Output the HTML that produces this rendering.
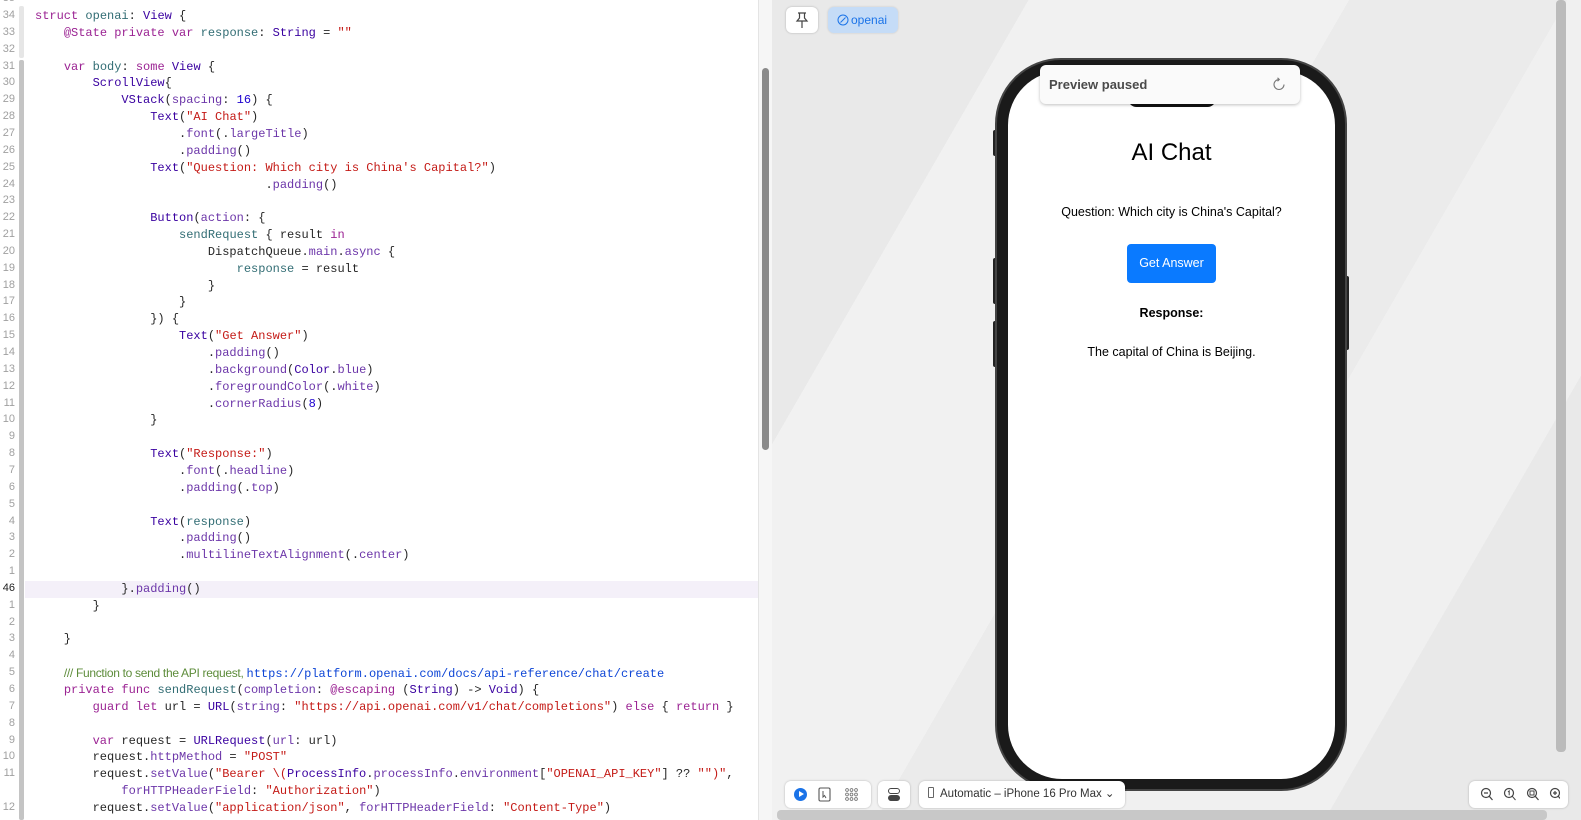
<!DOCTYPE html>
<html><head><meta charset="utf-8"><style>
*{margin:0;padding:0;box-sizing:border-box}
body{width:1581px;height:820px;overflow:hidden;background:#fff;position:relative;font-family:"Liberation Sans",sans-serif}
#ed{position:absolute;left:0;top:0;width:758px;height:820px;background:#fff;overflow:hidden}
.ln{position:absolute;left:0;width:15px;text-align:right;font:11px "Liberation Sans",sans-serif;color:#a0a0a0}
.cl{position:absolute;left:35px;font:12px/16px "Liberation Mono",monospace;color:#262626;white-space:pre}
.k{color:#9b2393}.t{color:#3900a0}.p{color:#326d74}.m{color:#6c36a9}.s{color:#c41a16}.n{color:#1c00cf}.c{color:#5d8c3a;font-family:"Liberation Sans",sans-serif;letter-spacing:-0.3px}.u{color:#0e46d6}
#pv{position:absolute;left:772px;top:0;width:809px;height:820px;background:#ececec;overflow:hidden}
.btn{position:absolute;background:#fff;border-radius:6px;box-shadow:0 0 2px rgba(0,0,0,.25)}
svg{position:absolute}
</style></head><body>
<div id="ed">
<div style="position:absolute;left:19px;top:6px;width:5px;height:52px;background:#e6e6e6;border-radius:2px"></div>
<div style="position:absolute;left:19px;top:60px;width:5px;height:760px;background:#c4c4c4;border-radius:2px"></div>
<div style="position:absolute;left:25px;top:581px;width:733px;height:17px;background:#f4f0f9"></div>
<div id="code"></div>
</div>
<div style="position:absolute;left:758px;top:0;width:14px;height:820px;background:#f6f6f6;border-left:1px solid #e4e4e4"></div>
<div style="position:absolute;left:762px;top:68px;width:7px;height:382px;background:#8a8a8a;border-radius:4px"></div>
<div id="pv">
<div style="position:absolute;inset:0;background:linear-gradient(120deg,#e9e9e9 0 20%,#f1f1f1 20% 45%,#ebebeb 45% 62%,#f0f0f0 62% 80%,#e9e9e9 80%)"></div>
<div class="btn" style="left:14px;top:7px;width:32px;height:26px"></div>
<svg style="left:22px;top:11px" width="16" height="18" viewBox="0 0 16 18" fill="none" stroke="#444" stroke-width="1.2"><path d="M4 2h8M5.5 2v5l-2.5 3h10l-2.5-3V2M8 10v7"/></svg>
<div style="position:absolute;left:56px;top:7px;width:70px;height:26px;background:#c5dcf7;border-radius:6px;box-shadow:0 0 2px rgba(0,0,0,.15);font-size:12px;color:#1a73e8;line-height:26px;padding-left:23px">openai</div>
<svg style="left:65px;top:14px" width="12" height="12" viewBox="0 0 12 12" fill="none" stroke="#1a73e8" stroke-width="1"><circle cx="6" cy="6" r="5"/><path d="M3.5 8.5l5-5"/></svg>
<!-- phone -->
<div style="position:absolute;left:221px;top:130px;width:5px;height:26px;background:#222;border-radius:2px"></div>
<div style="position:absolute;left:221px;top:258px;width:5px;height:46px;background:#222;border-radius:2px"></div>
<div style="position:absolute;left:221px;top:321px;width:5px;height:46px;background:#222;border-radius:2px"></div>
<div style="position:absolute;left:572px;top:276px;width:5px;height:74px;background:#222;border-radius:2px"></div>
<div style="position:absolute;left:223px;top:58px;width:352px;height:733px;background:#1a1a1a;border-radius:66px;border:2px solid #444"></div>
<div style="position:absolute;left:236px;top:71px;width:327px;height:708px;background:#ffffff;border-radius:54px"></div>
<div style="position:absolute;left:356px;top:90px;width:88px;height:17px;background:#111;border-radius:9px"></div>
<div style="position:absolute;left:268px;top:65px;width:260px;height:39px;background:#fafafa;border-radius:6px;box-shadow:0 1px 3px rgba(0,0,0,.25);font-weight:bold;font-size:13px;color:#4a4a4a;line-height:39px;padding-left:9px">Preview paused</div>
<svg style="left:500px;top:77px" width="14" height="15" viewBox="0 0 14 15" fill="none" stroke="#777" stroke-width="1.1"><path d="M7 2.5a5 5 0 1 0 5 5"/><path d="M5.5 0.8L7.3 2.5 5.5 4.2"/></svg>
<div style="position:absolute;left:236px;top:139px;width:327px;text-align:center;font-size:24px;color:#000">AI Chat</div>
<div style="position:absolute;left:236px;top:205px;width:327px;text-align:center;font-size:12.5px;color:#000">Question: Which city is China's Capital?</div>
<div style="position:absolute;left:355px;top:244px;width:89px;height:39px;background:#0a7aff;border-radius:4px;color:#fff;font-size:12.5px;text-align:center;line-height:39px">Get Answer</div>
<div style="position:absolute;left:236px;top:306px;width:327px;text-align:center;font-size:12.5px;font-weight:bold;color:#000">Response:</div>
<div style="position:absolute;left:236px;top:345px;width:327px;text-align:center;font-size:12.5px;color:#000">The capital of China is Beijing.</div>
<!-- bottom toolbar -->
<div class="btn" style="left:13px;top:781px;width:86px;height:27px"></div>
<div style="position:absolute;left:22px;top:788px;width:13px;height:13px;border-radius:50%;background:#1a73e8"></div>
<div style="position:absolute;left:27px;top:791px;border-left:5px solid #fff;border-top:3.5px solid transparent;border-bottom:3.5px solid transparent"></div>
<svg style="left:46px;top:787px" width="13" height="15" viewBox="0 0 13 15" fill="none" stroke="#555" stroke-width="1.1"><rect x="1" y="1" width="11" height="13" rx="1.5"/><path d="M5 4l0 6 1.5-1.5 1.5 2.5" stroke-width="1"/></svg>
<svg style="left:73px;top:788px" width="13" height="13" viewBox="0 0 13 13" fill="none" stroke="#777" stroke-width="0.9"><circle cx="2" cy="2" r="1.4"/><circle cx="6.5" cy="2" r="1.4"/><circle cx="11" cy="2" r="1.4"/><circle cx="2" cy="6.5" r="1.4"/><circle cx="6.5" cy="6.5" r="1.4"/><circle cx="11" cy="6.5" r="1.4"/><circle cx="2" cy="11" r="1.4"/><circle cx="6.5" cy="11" r="1.4"/><circle cx="11" cy="11" r="1.4"/></svg>
<div class="btn" style="left:106px;top:781px;width:32px;height:27px"></div>
<div style="position:absolute;left:116px;top:788px;width:12px;height:6px;border:1.3px solid #444;border-radius:3px"></div>
<div style="position:absolute;left:116px;top:795px;width:12px;height:6px;background:#444;border-radius:3px"></div>
<div class="btn" style="left:147px;top:781px;width:206px;height:27px;font-size:11.5px;color:#333;line-height:27px;padding-left:9px"><span style="display:inline-block;width:6px;height:11px;border:1.2px solid #666;border-radius:1px;vertical-align:-1px;margin-right:6px"></span>Automatic – iPhone 16 Pro Max ⌄</div>
<div class="btn" style="left:697px;top:781px;width:99px;height:27px"></div>
<svg style="left:708px;top:787px" width="80" height="16" viewBox="0 0 80 16" fill="none" stroke="#444" stroke-width="1.2">
<g><circle cx="6" cy="6" r="4.5"/><path d="M9.3 9.3L12.5 13M4 6h4"/></g>
<g transform="translate(23,0)"><circle cx="6" cy="6" r="4.5"/><path d="M9.3 9.3L12.5 13M5 5l1.2-1v4.2" stroke-width="1"/></g>
<g transform="translate(46,0)"><circle cx="6" cy="6" r="4.5"/><path d="M9.3 9.3L12.5 13"/><rect x="4" y="4" width="4" height="4" stroke-width="1"/></g>
<g transform="translate(69,0)"><circle cx="6" cy="6" r="4.5"/><path d="M9.3 9.3L12.5 13M4 6h4M6 4v4"/></g>
</svg>
<div style="position:absolute;left:784px;top:0;width:10px;height:752px;background:#bbb;border-radius:4px"></div>
<div style="position:absolute;left:5px;top:810px;width:770px;height:10px;background:#c8c8c8;border-radius:4px"></div>
</div>
<script>
var L=[
[-1,"35",""],
[0,"34",'<span class="k">struct</span> <span class="p">openai</span>: <span class="t">View</span> {'],
[1,"33",'    <span class="k">@State private var</span> <span class="p">response</span>: <span class="t">String</span> = <span class="s">""</span>'],
[2,"32",''],
[3,"31",'    <span class="k">var</span> <span class="p">body</span>: <span class="k">some</span> <span class="t">View</span> {'],
[4,"30",'        <span class="t">ScrollView</span>{'],
[5,"29",'            <span class="t">VStack</span>(<span class="m">spacing</span>: <span class="n">16</span>) {'],
[6,"28",'                <span class="t">Text</span>(<span class="s">"AI Chat"</span>)'],
[7,"27",'                    .<span class="m">font</span>(.<span class="m">largeTitle</span>)'],
[8,"26",'                    .<span class="m">padding</span>()'],
[9,"25",'                <span class="t">Text</span>(<span class="s">"Question: Which city is China\'s Capital?"</span>)'],
[10,"24",'                                .<span class="m">padding</span>()'],
[11,"23",''],
[12,"22",'                <span class="t">Button</span>(<span class="m">action</span>: {'],
[13,"21",'                    <span class="p">sendRequest</span> { result <span class="k">in</span>'],
[14,"20",'                        DispatchQueue.<span class="m">main</span>.<span class="m">async</span> {'],
[15,"19",'                            <span class="p">response</span> = result'],
[16,"18",'                        }'],
[17,"17",'                    }'],
[18,"16",'                }) {'],
[19,"15",'                    <span class="t">Text</span>(<span class="s">"Get Answer"</span>)'],
[20,"14",'                        .<span class="m">padding</span>()'],
[21,"13",'                        .<span class="m">background</span>(<span class="t">Color</span>.<span class="m">blue</span>)'],
[22,"12",'                        .<span class="m">foregroundColor</span>(.<span class="m">white</span>)'],
[23,"11",'                        .<span class="m">cornerRadius</span>(<span class="n">8</span>)'],
[24,"10",'                }'],
[25,"9",''],
[26,"8",'                <span class="t">Text</span>(<span class="s">"Response:"</span>)'],
[27,"7",'                    .<span class="m">font</span>(.<span class="m">headline</span>)'],
[28,"6",'                    .<span class="m">padding</span>(.<span class="m">top</span>)'],
[29,"5",''],
[30,"4",'                <span class="t">Text</span>(<span class="p">response</span>)'],
[31,"3",'                    .<span class="m">padding</span>()'],
[32,"2",'                    .<span class="m">multilineTextAlignment</span>(.<span class="m">center</span>)'],
[33,"1",''],
[34,"46",'            }.<span class="m">padding</span>()'],
[35,"1",'        }'],
[36,"2",''],
[37,"3",'    }'],
[38,"4",''],
[39,"5",'    <span class="c">/// Function to send the API request, </span><span class="u">https://platform.openai.com/docs/api-reference/chat/create</span>'],
[40,"6",'    <span class="k">private func</span> <span class="p">sendRequest</span>(<span class="m">completion</span>: <span class="k">@escaping</span> (<span class="t">String</span>) -&gt; <span class="t">Void</span>) {'],
[41,"7",'        <span class="k">guard let</span> url = <span class="t">URL</span>(<span class="m">string</span>: <span class="s">"https://api.openai.com/v1/chat/completions"</span>) <span class="k">else</span> { <span class="k">return</span> }'],
[42,"8",''],
[43,"9",'        <span class="k">var</span> request = <span class="t">URLRequest</span>(<span class="m">url</span>: url)'],
[44,"10",'        request.<span class="m">httpMethod</span> = <span class="s">"POST"</span>'],
[45,"11",'        request.<span class="m">setValue</span>(<span class="s">"Bearer \\(</span><span class="t">ProcessInfo</span>.<span class="m">processInfo</span>.<span class="m">environment</span>[<span class="s">"OPENAI_API_KEY"</span>] ?? <span class="s">""</span><span class="s">)"</span>,'],
[46,"",'            <span class="m">forHTTPHeaderField</span>: <span class="s">"Authorization"</span>)'],
[47,"12",'        request.<span class="m">setValue</span>(<span class="s">"application/json"</span>, <span class="m">forHTTPHeaderField</span>: <span class="s">"Content-Type"</span>)']
];
var h="";
L.forEach(function(r){var y=16+r[0]*16.85-8;
h+='<div class="ln" style="top:'+(y+1)+'px'+(r[1]=="46"?';color:#222':'')+'">'+r[1]+'</div>';
h+='<div class="cl" style="top:'+y+'px">'+r[2]+'</div>';});
document.getElementById("code").innerHTML=h;
</script>
</body></html>
